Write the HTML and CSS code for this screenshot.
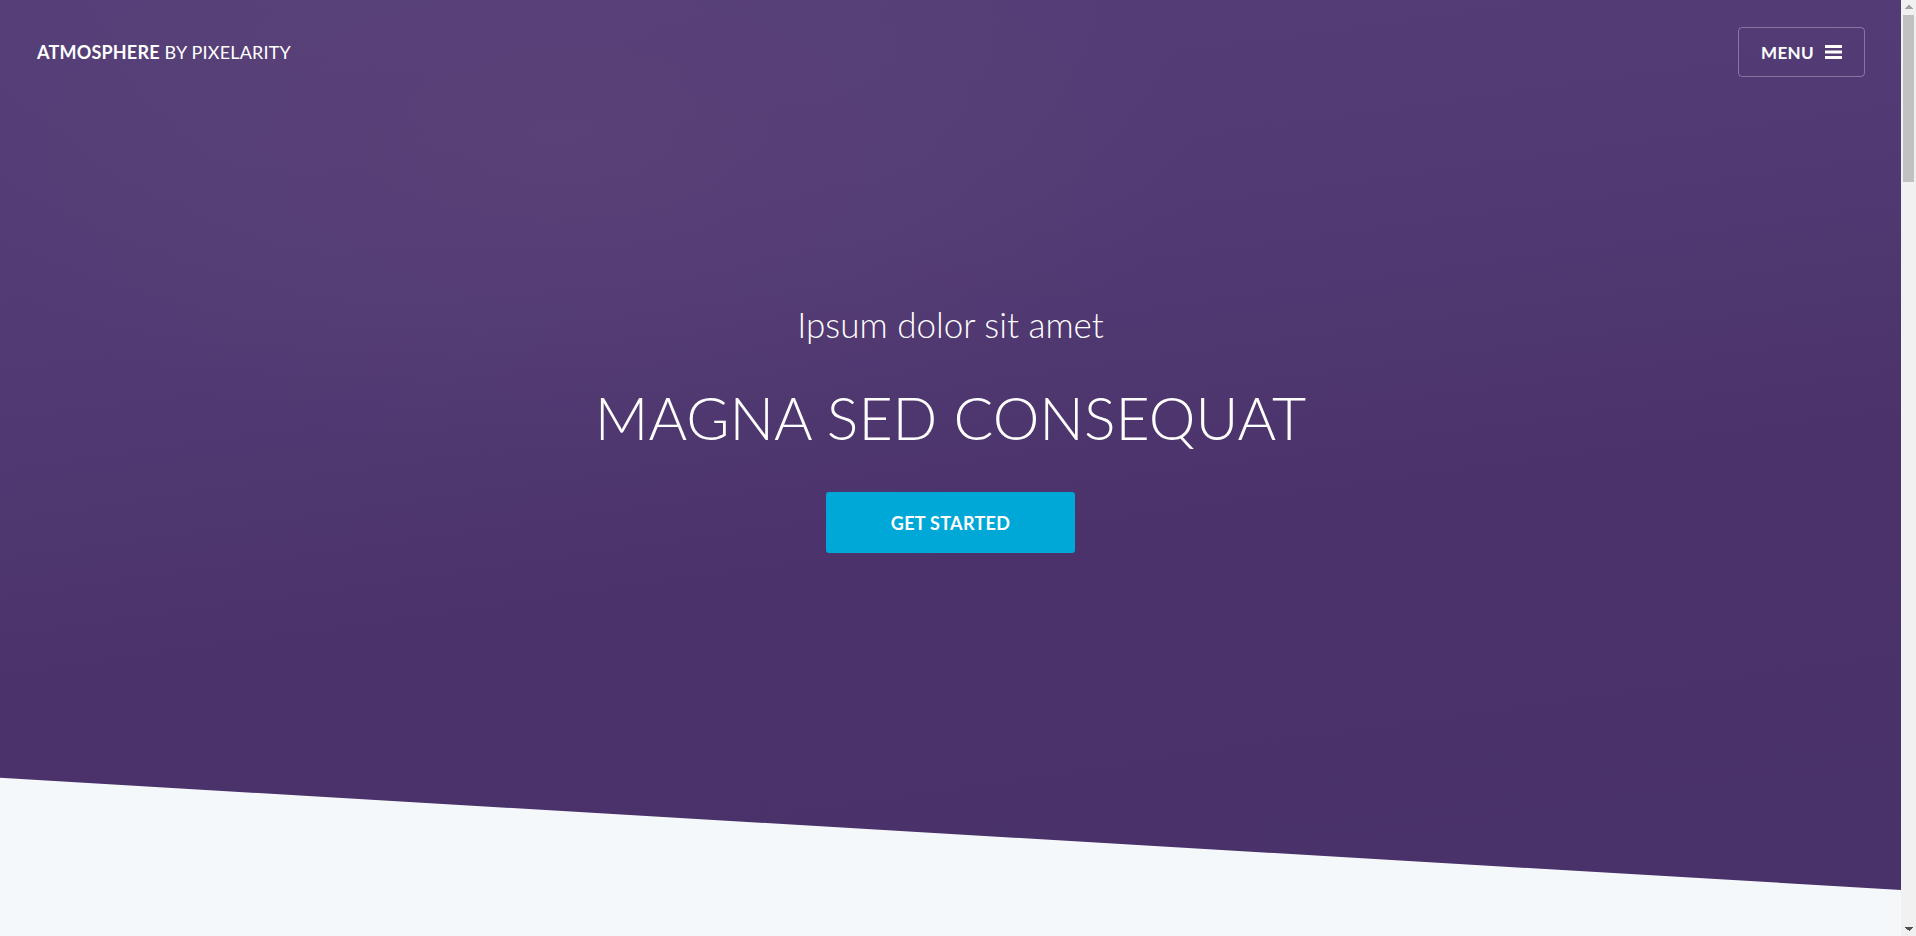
FILE: index.html
```html
<!DOCTYPE html>
<html lang="en">
<head>
<meta charset="utf-8">
<title>Atmosphere by Pixelarity</title>
<link rel="stylesheet" href="styles.css">
</head>
<body>
<div class="page">
  <section class="hero">
    <header class="topbar">
      <a class="logo" href="#"><strong>ATMOSPHERE</strong> BY PIXELARITY</a>
      <a class="menu-btn" href="#">MENU
        <svg class="burger" width="17" height="14" viewBox="0 0 17 14" aria-hidden="true">
          <rect x="0" y="0" width="17" height="3" fill="#fff"/>
          <rect x="0" y="5.5" width="17" height="3" fill="#fff"/>
          <rect x="0" y="11" width="17" height="3" fill="#fff"/>
        </svg>
      </a>
    </header>
    <div class="hero-content">
      <p class="subtitle">Ipsum dolor sit amet</p>
      <h1 class="title">MAGNA SED CONSEQUAT</h1>
      <a class="cta" href="#">GET STARTED</a>
    </div>
  </section>
  <main class="below"></main>
</div>
<div class="scrollbar" aria-hidden="true">
  <div class="sb-btn sb-up"></div>
  <div class="sb-track"><div class="sb-thumb"></div></div>
  <div class="sb-btn sb-down"></div>
</div>
</body>
</html>
```

FILE: styles.css
```css
html, body {
  margin: 0;
  padding: 0;
  height: 100%;
  overflow: hidden;
}
body {
  display: flex;
  background: #f5f8fa;
  font-family: Lato, "Open Sans", sans-serif;
  color: #fff;
}
a { color: inherit; text-decoration: none; }

.page {
  flex: 1;
  min-width: 0;
  height: 100vh;
  overflow-y: auto;
  scrollbar-width: none;
  background: #f5f8fa;
}

/* window scrollbar */
.scrollbar {
  width: 15px;
  flex: none;
  height: 100vh;
  display: flex;
  flex-direction: column;
  background: #f1f1f1;
}
.sb-btn {
  height: 15px;
  flex: none;
  background-repeat: no-repeat;
  background-size: 4px 4px;
}
.sb-up {
  background-image:
    linear-gradient(to bottom right, transparent 50%, #a3a3a3 50%),
    linear-gradient(to bottom left, transparent 50%, #a3a3a3 50%);
  background-position: 4px 5px, 8px 5px;
}
.sb-down {
  background-image:
    linear-gradient(to top right, transparent 50%, #505050 50%),
    linear-gradient(to top left, transparent 50%, #505050 50%);
  background-position: 4px 6px, 8px 6px;
}
.sb-track {
  flex: 1;
  padding: 0 2px;
}
.sb-thumb {
  height: 167px;
  background: #c1c1c1;
}

.hero {
  height: 890px;
  display: flex;
  flex-direction: column;
  background:
    radial-gradient(ellipse 900px 450px at 30% 16%, rgba(112, 80, 125, 0.22), rgba(112, 80, 125, 0) 70%),
    linear-gradient(172deg, #563f78 0%, #523b74 30%, #4b326b 60%, #49316a 100%);
  clip-path: polygon(0 0, 100% 0, 100% 100%, 0 87.4%);
}

.topbar {
  display: flex;
  justify-content: space-between;
  align-items: center;
  padding: 27px 36px 0 37px;
}
.logo {
  font-size: 18px;
  font-weight: 400;
  letter-spacing: 0.2px;
}
.logo strong { font-weight: 700; }

.menu-btn {
  display: flex;
  align-items: center;
  justify-content: center;
  gap: 11px;
  box-sizing: border-box;
  width: 127px;
  height: 50px;
  border: 1px solid rgba(255, 255, 255, 0.3);
  border-radius: 4px;
  font-size: 17px;
  font-weight: 700;
  letter-spacing: 0.3px;
}
.burger { display: block; }

.hero-content {
  display: flex;
  flex-direction: column;
  align-items: center;
  padding-top: 230px;
}
.subtitle {
  margin: 0;
  font-size: 35px;
  font-weight: 300;
  line-height: 1;
}
.title {
  margin: 46px 0 0;
  font-size: 59px;
  font-weight: 300;
  line-height: 1;
}
.cta {
  margin-top: 45px;
  display: flex;
  align-items: center;
  justify-content: center;
  width: 249px;
  height: 61px;
  background: #00a8d8;
  border-radius: 3px;
  font-size: 18px;
  font-weight: 700;
  letter-spacing: 0.3px;
}

.below {
  display: block;
  height: 4170px;
}
```
